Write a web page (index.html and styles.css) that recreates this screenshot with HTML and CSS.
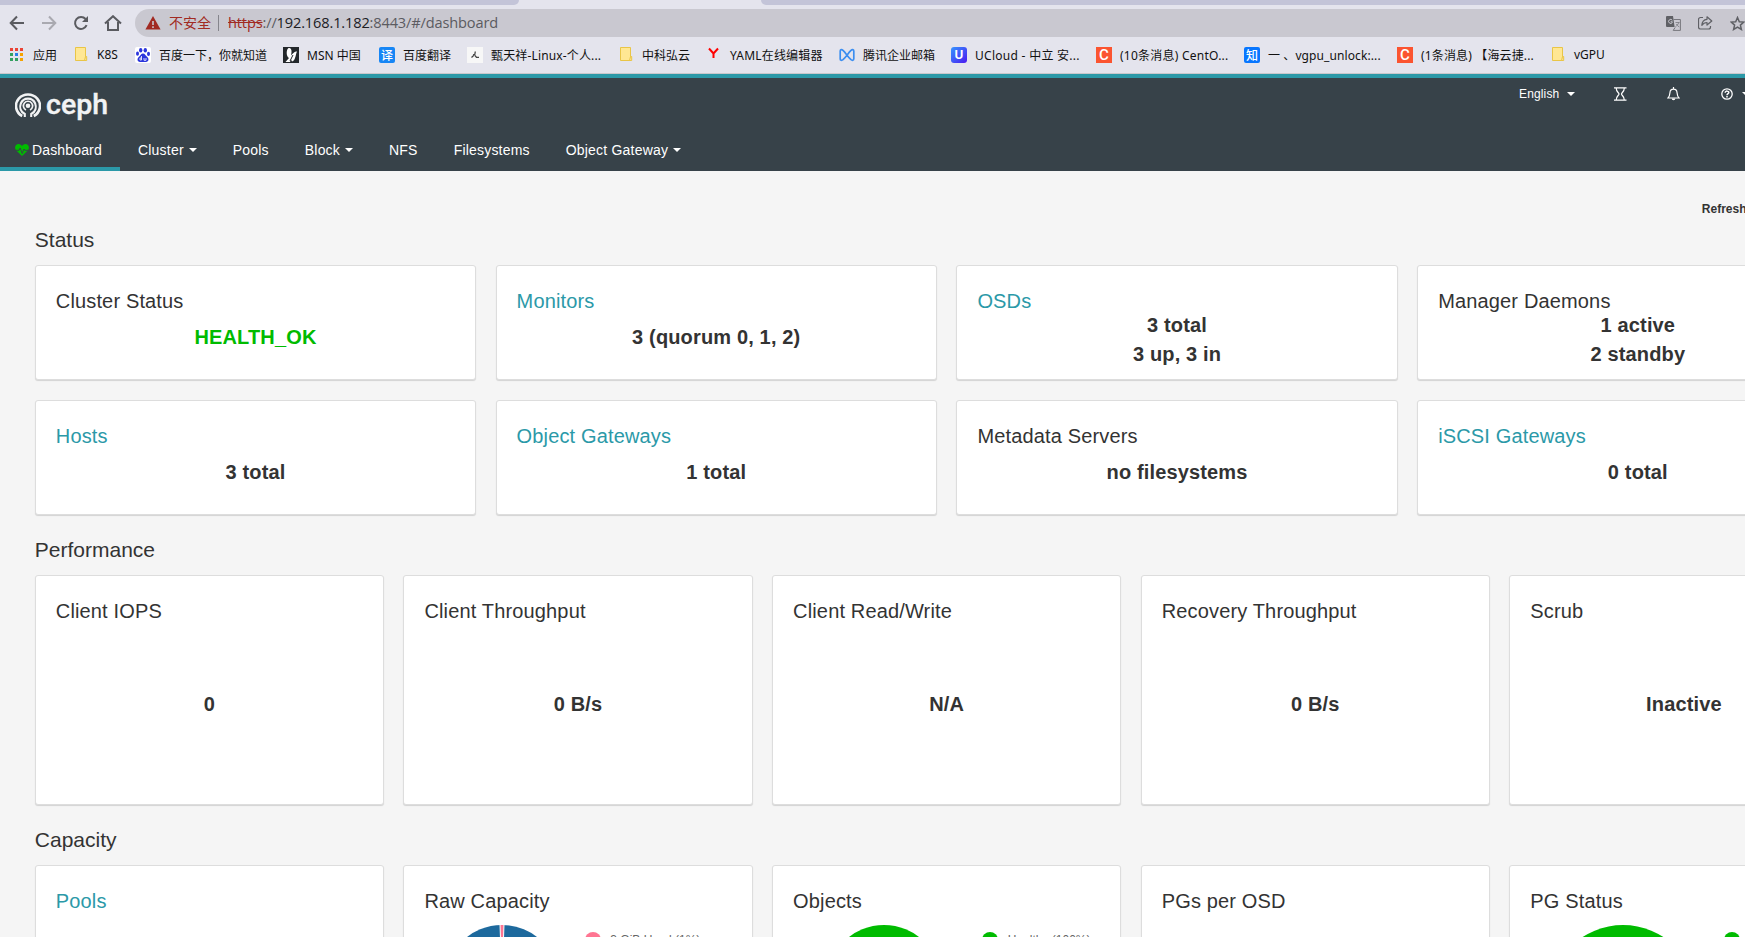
FILE: index.html
```html
<!DOCTYPE html>
<html lang="en">
<head>
<meta charset="utf-8">
<title>Ceph</title>
<link rel="stylesheet" href="styles.css">
</head>
<body>
<div class="window">
  <div class="tabstrip"><i class="tab-left"></i><i class="tab-right"></i></div>
  <div class="toolbar">
    <svg class="tool" width="16" height="16" viewBox="0 0 16 16"><path d="M15 8H2M8 1.500 1.700 8 8 14.500" fill="none" stroke="#5a5b60" stroke-width="2"/></svg>
    <svg class="tool" width="16" height="16" viewBox="0 0 16 16"><path d="M1 8h13M8 1.500 14.300 8 8 14.500" fill="none" stroke="#a9a9b0" stroke-width="2"/></svg>
    <svg class="tool" width="16" height="16" viewBox="0 0 16 16"><path d="M13.600 10.200A6 6 0 1 1 12.600 4" fill="none" stroke="#5a5b60" stroke-width="2"/><path d="M15 1v6H9z" fill="#5a5b60"/></svg>
    <svg class="tool home" width="18" height="16" viewBox="0 0 18 16"><path d="M1 8.600 9 1.200l8 7.400M4 7v8h10V7" fill="none" stroke="#5a5b60" stroke-width="2"/></svg>
    <div class="address">
      <svg width="16" height="14" viewBox="0 0 16 14"><path d="M8 0l7.600 13.500H.4z" fill="#a12a22"/><path d="M8 5v4M8 10.300v1.600" stroke="#c9c8d0" stroke-width="1.600"/></svg>
      <span class="unsafe">不安全</span><i class="divider"></i>
      <span class="url"><s>https</s>://<b>192.168.1.182</b>:8443/#/dashboard</span>
      <div class="address-tools">
        <svg width="15" height="15" viewBox="0 0 15 15"><path d="M1 0h6l1.600 11H1a1 1 0 0 1-1-1V1a1 1 0 0 1 1-1z" fill="#5f6065"/><path d="M7.500 3.500h6.900v10.900H7.200l2-3" fill="none" stroke="#77777d"/><path d="M6.300 4.300A2 2 0 1 0 6.300 6.500V5.800H4.600" fill="none" stroke="#c9c8d0"/><path d="M9.500 6.500h4M12.800 6.500c-.6 2-2 3.300-3.300 4M10.300 8c.8 1.400 1.700 2.300 3 3" fill="none" stroke="#77777d" stroke-width=".8"/></svg>
        <svg width="15" height="14" viewBox="0 0 15 14"><path d="M5 1.500H2.500a2 2 0 0 0-2 2v7.500a2 2 0 0 0 2 2h8a2 2 0 0 0 2-2V10" fill="none" stroke="#5f6065" stroke-width="1.200"/><path d="M9 .8 13.800 5 9 9V6.500C6.500 6.500 5 7.500 3.800 9.300 4 5.800 5.800 3.600 9 3.300z" fill="none" stroke="#5f6065" stroke-width="1.200" stroke-linejoin="round"/></svg>
        <svg width="15" height="15" viewBox="0 0 15 15"><path d="M7.500 1.500l1.800 4.200 4.500.4-3.400 3 1 4.400-3.900-2.400-3.900 2.400 1-4.400-3.400-3 4.500-.4z" fill="none" stroke="#5f6065" stroke-width="1.500"/></svg>
      </div>
    </div>
  </div>
  <div class="bookmarks">
    <div class="bm apps"><svg width="14" height="14" viewBox="0 0 14 14"><path d="M0 0h3v3H0zM5 0h3v3H5zM10 0h3v3h-3z" fill="#ea4335"/><path d="M0 5h3v3H0zM0 10h3v3H0z" fill="#34a060"/><path d="M5 5h3v3H5z" fill="#2b7fe8"/><path d="M10 5h3v3h-3zM10 10h3v3h-3z" fill="#f5a300"/><path d="M5 10h3v3H5z" fill="#34a060"/></svg><span>应用</span></div>
    <div class="bm k8s"><svg class="folder" width="13" height="15" viewBox="0 0 13 15"><path d="M.5.5h10v13h-10z" fill="#ffe793" stroke="#e9c547"/><path d="M10.500 9.500h1.200v4H9.500z" fill="#ffe793" stroke="#e9c547"/></svg><span>K8S</span></div>
    <div class="bm baidu"><svg width="16" height="16" viewBox="0 0 16 16"><rect width="16" height="16" rx="2" fill="#fff"/><g fill="#2b35dc"><ellipse cx="5.700" cy="3.300" rx="1.700" ry="2.300"/><ellipse cx="10.300" cy="3.300" rx="1.700" ry="2.300"/><ellipse cx="2.500" cy="6.700" rx="1.500" ry="2.100"/><ellipse cx="13.500" cy="6.900" rx="1.500" ry="2.100"/><path d="M8 6.500c2 0 2.500 2 4 3.200 2.200 1.700 2 5-1 5.300-1.500.1-4.500.1-6 0-3-.3-3.200-3.600-1-5.300C5.500 8.500 6 6.500 8 6.500z"/></g><path d="M6.500 9v4H5V11h1.500M9 11v2.300h2V11" fill="none" stroke="#fff" stroke-width=".8"/></svg><span>百度一下，你就知道</span></div>
    <div class="bm msn"><svg width="16" height="16" viewBox="0 0 16 16"><path d="M0 0h16v16H0z" fill="#23272b"/><path d="M5 1.500c2-1.500 4 1 3.500 4l-.5 3c2-2.500 4-4.500 6-4-1 2-1 4-2 6.500-.5 2-1.500 3-3 3.500l-1-2-1 2.500H2.500L6 11C3 9.500 3.300 3 5 1.500z" fill="#fff"/><path d="m7 14 3-6" stroke="#23272b"/></svg><span>MSN 中国</span></div>
    <div class="bm fanyi"><i class="fav blue">译</i><span>百度翻译</span></div>
    <div class="bm zhen"><svg width="16" height="16" viewBox="0 0 16 16"><path d="M0 0h16v16H0z" fill="#f7f7f7"/><path d="M8.300 4.500 7.800 7.500 4.500 10.500M8 7.500 6 7.800M8 8.500l1.500 1.800H12" fill="none" stroke="#444" stroke-width="1.300"/></svg><span>甄天祥-Linux-个人...</span></div>
    <div class="bm zhongke"><svg class="folder" width="13" height="15" viewBox="0 0 13 15"><path d="M.5.5h10v13h-10z" fill="#ffe793" stroke="#e9c547"/><path d="M10.500 9.500h1.200v4H9.500z" fill="#ffe793" stroke="#e9c547"/></svg><span>中科弘云</span></div>
    <div class="bm yaml"><svg width="11" height="16" viewBox="0 0 11 16"><path d="M1 1.500 5.500 6.500 10 1.500M5.500 6v5" fill="none" stroke="#f00" stroke-width="2"/></svg><span>YAML在线编辑器</span></div>
    <div class="bm tencent"><svg width="16" height="16" viewBox="0 0 16 16"><path d="M1.200 12V4c0-1.800 1.600-1.800 2.800-.6C7 6.300 9 10 12 12.700c1.200 1 2.800.7 2.800-.9V4c0-1.800-1.600-1.800-2.800-.6C9 6.300 7 10 4 12.700c-1.200 1-2.800.7-2.800-.7z" fill="none" stroke="#3c8ef0" stroke-width="1.700"/></svg><span>腾讯企业邮箱</span></div>
    <div class="bm ucloud"><i class="fav purple">U</i><span>UCloud - 中立 安...</span></div>
    <div class="bm csdn"><i class="fav orange">C</i><span>(10条消息) CentO...</span></div>
    <div class="bm zhihu"><i class="fav azure">知</i><span>一 、vgpu_unlock:...</span></div>
    <div class="bm csdn2"><i class="fav orange">C</i><span>(1条消息) 【海云捷...</span></div>
    <div class="bm vgpu"><svg class="folder" width="13" height="15" viewBox="0 0 13 15"><path d="M.5.5h10v13h-10z" fill="#ffe793" stroke="#e9c547"/><path d="M10.500 9.500h1.200v4H9.500z" fill="#ffe793" stroke="#e9c547"/></svg><span>vGPU</span></div>
  </div>

  <header class="navbar">
    <div class="brandbar">
      <div class="brand">
        <svg width="26" height="26" viewBox="0 0 26 26"><g fill="none" stroke="#f2f3f4"><path d="M7.200 24A12 11.500 0 1 1 18.800 24" stroke-width="2.600"/><path d="M9.800 25V22C5 19.500 4.500 15 5.800 11.500 8.500 5 17.500 5 20.200 11.500 21.500 15 21 19.500 16.200 22v3" stroke-width="2.100"/><path d="M11 18A4.600 4.600 0 1 1 15 18" stroke-width="1.700"/></g><circle cx="13" cy="13.800" r="2.300" fill="#f2f3f4"/></svg>
        <span>ceph</span>
      </div>
      <div class="utilities">
        <span class="language">English</span><i class="caret"></i>
        <svg class="hourglass" width="13" height="14" viewBox="0 0 13 14"><path d="M0 .8h12.500M0 13.200h12.500M2.200 1c0 4 2.800 4.500 2.800 6S2.200 9 2.200 13M10.300 1c0 4-2.800 4.500-2.800 6s2.800 2 2.800 6" fill="none" stroke="#fff" stroke-width="1.200"/></svg>
        <svg class="bell" width="13" height="14" viewBox="0 0 13 14"><path d="M6.500 0v2M1 11h11C10.500 9.500 10.200 8 10 5.500 9.800 1 3.200 1 3 5.500 2.800 8 2.500 9.500 1 11z" fill="none" stroke="#fff" stroke-width="1.200"/><path d="M4.700 11.500h3.600a1.800 1.800 0 0 1-3.600 0z" fill="#fff"/></svg>
        <svg class="help" width="12" height="12" viewBox="0 0 12 12"><circle cx="6" cy="6" r="5.200" fill="none" stroke="#fff" stroke-width="1.300"/><path d="M4.200 4.700C4.200 2.500 8 2.700 7.800 4.700 7.700 5.700 6 5.800 6 7.200M6 8v1.500" fill="none" stroke="#fff" stroke-width="1.500"/></svg>
        <i class="caret"></i>
      </div>
    </div>
    <nav class="menu">
      <a class="active"><svg width="14" height="12" viewBox="0 0 14 12"><path d="M7 12 .8 6C-1 3 .8 0 3.600 0 5.300 0 6.300 1 7 2 7.700 1 8.700 0 10.400 0 13.200 0 15 3 13.200 6z" fill="#0b0"/><path d="M0 6.300h4L5.200 4l2 5.500L9 5l.8 1.300H14" fill="none" stroke="#374249"/></svg>Dashboard</a>
      <a>Cluster<i class="caret"></i></a>
      <a>Pools</a>
      <a>Block<i class="caret"></i></a>
      <a>NFS</a>
      <a>Filesystems</a>
      <a>Object Gateway<i class="caret"></i></a>
    </nav>
  </header>

  <main class="page">
    <div class="refresh">Refresh</div>
    <h2>Status</h2>
    <section class="grid four">
      <article class="card"><h3>Cluster Status</h3><p class="ok">HEALTH_OK</p></article>
      <article class="card"><h3 class="link">Monitors</h3><p>3 (quorum 0, 1, 2)</p></article>
      <article class="card"><h3 class="link">OSDs</h3><p class="double">3 total<br>3 up, 3 in</p></article>
      <article class="card"><h3>Manager Daemons</h3><p class="double">1 active<br>2 standby</p></article>
      <article class="card"><h3 class="link">Hosts</h3><p>3 total</p></article>
      <article class="card"><h3 class="link">Object Gateways</h3><p>1 total</p></article>
      <article class="card"><h3>Metadata Servers</h3><p>no filesystems</p></article>
      <article class="card"><h3 class="link">iSCSI Gateways</h3><p>0 total</p></article>
    </section>
    <h2>Performance</h2>
    <section class="grid five">
      <article class="card"><h3>Client IOPS</h3><p>0</p></article>
      <article class="card"><h3>Client Throughput</h3><p>0 B/s</p></article>
      <article class="card"><h3>Client Read/Write</h3><p>N/A</p></article>
      <article class="card"><h3>Recovery Throughput</h3><p>0 B/s</p></article>
      <article class="card"><h3>Scrub</h3><p>Inactive</p></article>
    </section>
    <h2>Capacity</h2>
    <section class="grid five">
      <article class="card"><h3 class="link">Pools</h3></article>
      <article class="card"><h3>Raw Capacity</h3>
        <div class="chart raw"><svg width="114" height="114" viewBox="0 0 114 114"><circle cx="57" cy="57" r="57" fill="#1d699d"/><path d="M57 57 55 -1h4z" fill="#ff7592" stroke="#fff"/></svg><div class="legend"><i class="dot pink"></i>3 GiB Used (1%)</div></div></article>
      <article class="card"><h3>Objects</h3>
        <div class="chart objects"><svg width="114" height="114" viewBox="0 0 114 114"><circle cx="57" cy="57" r="57" fill="#0b0"/></svg><div class="legend"><i class="dot"></i>Healthy (100%)</div></div></article>
      <article class="card"><h3>PGs per OSD</h3></article>
      <article class="card"><h3>PG Status</h3>
        <div class="chart pgs"><svg width="148" height="148" viewBox="0 0 148 148"><circle cx="74" cy="74" r="74" fill="#0b0"/></svg><div class="legend"><i class="dot"></i></div></div></article>
    </section>
  </main>
</div>
</body>
</html>
```
FILE: styles.css
```css
* { box-sizing: border-box; }
body { margin: 0; font-family: "Liberation Sans", Arial, sans-serif; color: #333; }
.window { width: 1745px; height: 937px; overflow: hidden; background: #f5f5f5; }
svg { display: block; flex: none; }

.tabstrip { height: 5px; background: #e4e4ed; display: flex; justify-content: space-between; }
.tab-left { width: 519px; background: #c3c4d8; border-radius: 0 0 7px 0; }
.tab-right { width: 984px; background: #c3c4d8; border-radius: 0 0 0 7px; }
.toolbar { height: 36px; padding: 4px 0 4px 9px; background: #e4e4ed; display: flex; align-items: center; gap: 16px; }
.home { margin-left: -1px; }
.address { flex: 1; height: 28px; margin-left: -3px; padding-left: 10px; border-radius: 14px 0 0 14px; background: #c9c8d0; display: flex; align-items: center; font: 14px "Noto Sans", "Noto Sans CJK SC", sans-serif; white-space: nowrap; }
.unsafe { margin-left: 8px; padding-bottom: 2px; color: #a12a22; font-family: "Noto Sans CJK SC", sans-serif; }
.divider { width: 1px; height: 16px; margin: 0 9px 0 7px; background: #85858c; }
.url { padding-bottom: 2px; font: 14.6px "Open Sans", "Noto Sans", sans-serif; color: #5b5b61; letter-spacing: -.15px; }
.url s { color: #a12a22; }
.url b { font-weight: 400; color: #202024; }
.address-tools { margin-left: auto; display: flex; gap: 17px; width: 79px; }

.bookmarks { height: 33px; padding: 0 0 5px 10px; background: #e4e4ed; border-bottom: 1px solid #c8c8cc; display: flex; align-items: center; font: 12px "Noto Sans", "Noto Sans CJK SC", sans-serif; color: #111; white-space: nowrap; }
.bm { display: flex; align-items: center; gap: 8px; flex: none; }
.apps { width: 65px; gap: 9px; }
.k8s { width: 60px; }
.k8s, .zhongke, .vgpu { gap: 9px; }
.baidu { width: 148px; }
.msn { width: 96px; }
.fanyi { width: 88px; }
.zhen { width: 153px; letter-spacing: .15px; }
.zhongke { width: 88px; }
.yaml { width: 131px; gap: 11px; letter-spacing: .2px; }
.tencent { width: 112px; }
.ucloud { width: 145px; letter-spacing: .28px; }
.csdn { width: 148px; letter-spacing: .24px; }
.zhihu { width: 153px; letter-spacing: .1px; }
.csdn2 { width: 155px; letter-spacing: .15px; }
.fav { width: 16px; height: 16px; display: grid; place-items: center; color: #fff; font: 500 12px/16px "Noto Sans CJK SC", sans-serif; letter-spacing: 0; border-radius: 2px; }
.blue { background: #1786f5; }
.azure { background: #0876ff; }
.purple { background: linear-gradient(135deg, #3695ff, #4a18f0); font: 700 12px/16px Inter, sans-serif; border-radius: 3px; }
.orange { background: #fb5430; border-radius: 0; font: 500 15px/16px Roboto, sans-serif; }

.navbar { height: 97px; background: #374249; border-top: 4px solid #2b99a8; color: #fff; }
.brandbar { height: 54px; display: flex; justify-content: space-between; }
.brand { display: flex; align-items: flex-start; padding: 14px 0 0 15px; gap: 5px; }
.brand span { padding-top: 1px; font: 500 28.5px/24px Roboto, sans-serif; color: #f2f3f4; -webkit-text-stroke: .4px #f2f3f4; }
.utilities { width: 226px; height: 32px; display: flex; align-items: center; font-size: 12px; letter-spacing: .15px; }
.language { width: 48px; flex: none; }
.caret { display: inline-block; flex: none; border: 4px solid transparent; border-top-color: currentColor; border-bottom: 0; }
.hourglass { margin-left: 39px; }
.bell { margin-left: 40px; }
.help { margin: 0 9px 0 41px; }
.menu { height: 39px; display: flex; font-size: 14px; letter-spacing: .2px; }
.menu a { display: flex; align-items: center; padding: 0 18px; border-bottom: 4px solid transparent; height: 39px; white-space: nowrap; }
.menu a.active { width: 120px; padding: 0 0 0 15px; border-color: #2b99a8; gap: 3px; letter-spacing: .15px; }
.menu .caret { margin-left: 5px; }

.page { width: 1893px; padding: 31px 34.5px 0 34.8px; }
.refresh { height: 14px; padding-left: 1667px; font-weight: 700; font-size: 12px; line-height: 14px; }
h2 { margin: 0; font-weight: 400; font-size: 21px; line-height: 24px; padding: 12px 0; height: 49px; }
.grid { display: grid; gap: 20px 19.5px; }
.four { grid-template-columns: repeat(4, 1fr); grid-auto-rows: 115px; margin-bottom: 11px; }
.five { grid-template-columns: repeat(5, 1fr); grid-auto-rows: 230px; margin-bottom: 11px; }
.card { background: #fff; border: 1px solid #ddd; border-radius: 3px; box-shadow: 0 1px 1px rgba(0,0,0,.14); padding: 23px 20px 0; display: flex; flex-direction: column; letter-spacing: .15px; }
h3 { margin: 0; font-weight: 400; font-size: 20px; line-height: 24px; }
.link { color: #2b99a8; }
.card p { margin: 0; padding-top: 10px; font-weight: 700; font-size: 20px; line-height: 29px; text-align: center; }
.card p.ok { color: #0b0; }
.card p.double { padding-top: 0; margin-top: -2px; }
.five .card p { padding-top: 67px; }
.chart { display: flex; padding-top: 12px; letter-spacing: 0; }
.raw { padding-left: 21px; }
.objects { padding-left: 33.5px; }
.pgs { padding-left: 18.7px; }
.legend { display: flex; height: 29px; align-items: center; margin-left: 25.4px; font-size: 12px; color: #666; white-space: nowrap; }
.objects .legend { margin-left: 41.7px; }
.pgs .legend { margin-left: 26.6px; }
.dot { width: 16px; height: 16px; border-radius: 50%; background: #0b0; margin-right: 9.5px; }
.pink { background: #ff7592; }
```
